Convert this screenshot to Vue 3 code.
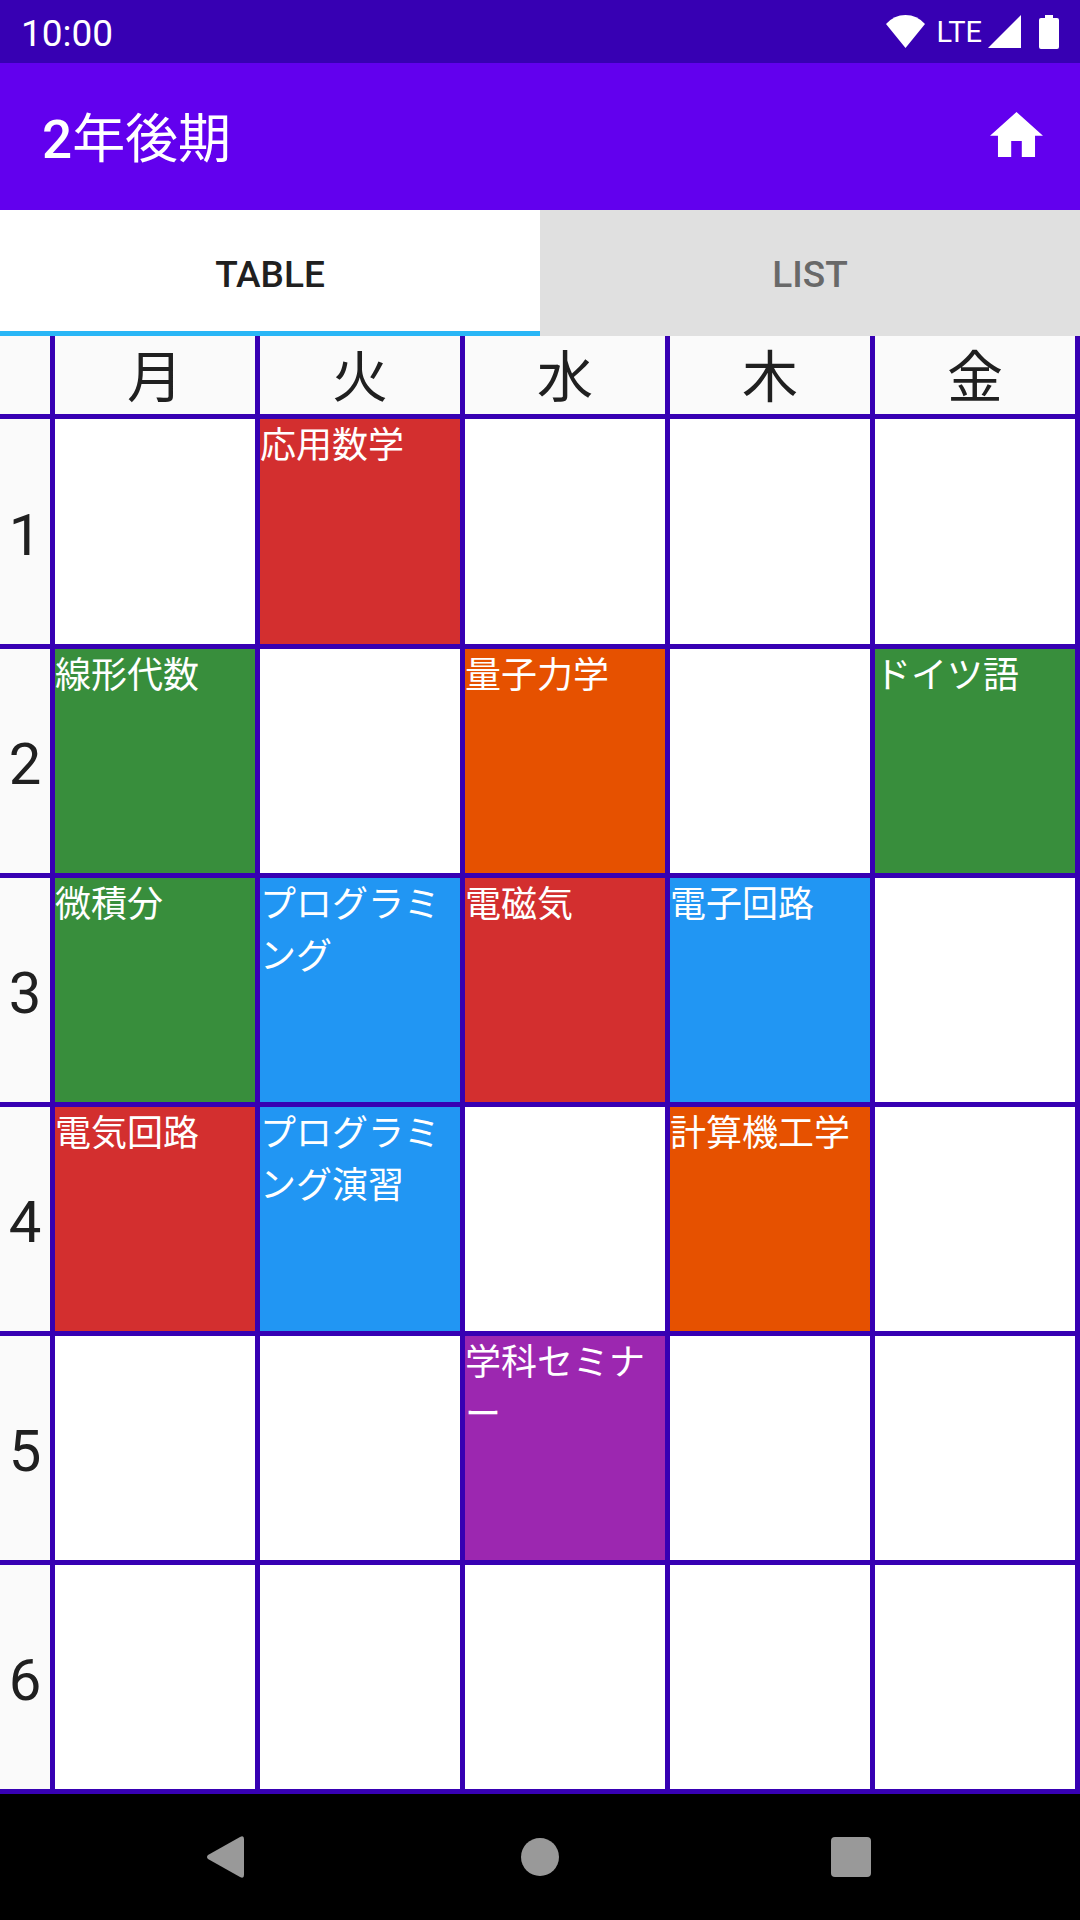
<script setup>
import { ref } from 'vue'

const tabs = ['TABLE', 'LIST']
const activeTab = ref('TABLE')
const days = ['月', '火', '水', '木', '金']

const periods = [
  [null, { name: '応用数学', color: 'red' }, null, null, null],
  [{ name: '線形代数', color: 'green' }, null, { name: '量子力学', color: 'orange' }, null, { name: 'ドイツ語', color: 'green' }],
  [{ name: '微積分', color: 'green' }, { name: 'プログラミング', color: 'blue' }, { name: '電磁気', color: 'red' }, { name: '電子回路', color: 'blue' }, null],
  [{ name: '電気回路', color: 'red' }, { name: 'プログラミング演習', color: 'blue' }, null, { name: '計算機工学', color: 'orange' }, null],
  [null, null, { name: '学科セミナー', color: 'purple' }, null, null],
  [null, null, null, null, null]
]
</script>

<template>
  <div class="screen" lang="ja">
    <div class="status">
      <span class="clock">10:00</span>
      <svg class="wifi" width="39" height="33" viewBox="0 0 39 33" aria-hidden="true">
        <path d="M0 9Q8 0 19.500 0T39 9L19.500 33Z" />
      </svg>
      <span class="network">LTE</span>
      <svg class="signal" width="33" height="33" viewBox="0 0 33 33" aria-hidden="true">
        <path d="M0 33H33V0Z" />
      </svg>
      <svg class="battery" width="20" height="34" viewBox="0 0 20 34" aria-hidden="true">
        <path d="M6 0h8v3h4q2 0 2 2v27q0 2-2 2H2q-2 0-2-2V5q0-2 2-2h4z" />
      </svg>
    </div>

    <header class="appbar">
      <h1>2<span>年後期</span></h1>
      <button class="home" type="button" aria-label="Home">
        <svg width="53" height="45" viewBox="2 3 20 17" aria-hidden="true">
          <path d="M10 20v-6h4v6h5v-8h3L12 3 2 12h3v8z" />
        </svg>
      </button>
    </header>

    <div class="tabs" role="tablist">
      <button
        v-for="tab in tabs"
        :key="tab"
        class="tab"
        :class="{ active: tab === activeTab }"
        type="button"
        role="tab"
        :aria-selected="tab === activeTab"
        @click="activeTab = tab"
      >{{ tab }}</button>
    </div>

    <main class="content">
      <table class="timetable">
        <thead>
          <tr>
            <td class="corner"></td>
            <th v-for="day in days" :key="day" scope="col">{{ day }}</th>
          </tr>
        </thead>
        <tbody>
          <tr v-for="(row, i) in periods" :key="i">
            <th scope="row">{{ i + 1 }}</th>
            <td v-for="(lesson, j) in row" :key="j" :class="lesson?.color">{{ lesson?.name }}</td>
          </tr>
        </tbody>
      </table>
    </main>

    <nav class="navbar">
      <button type="button" aria-label="Back">
        <svg class="back" width="44" height="42" viewBox="0 0 44 42" aria-hidden="true">
          <path d="M1 19 33 1Q37-1 37 3V39Q37 43 33 41L1 23Q-1 21 1 19Z" />
        </svg>
      </button>
      <button type="button" aria-label="Home screen">
        <svg width="38" height="38" viewBox="0 0 38 38" aria-hidden="true">
          <circle cx="19" cy="19" r="19" />
        </svg>
      </button>
      <button type="button" aria-label="Recent apps">
        <svg width="40" height="40" viewBox="0 0 40 40" aria-hidden="true">
          <rect width="40" height="40" rx="4" />
        </svg>
      </button>
    </nav>
  </div>
</template>

<style>
body {
  margin: 0;
}
</style>

<style scoped>
.screen {
  display: flex;
  flex-direction: column;
  min-height: 100vh;
  background: #fafafa;
  color: #202020;
  font-family: Roboto, "Noto Sans CJK JP", sans-serif;
}

button {
  margin: 0;
  padding: 0;
  border: 0;
  background: none;
  font-family: inherit;
  cursor: pointer;
}

svg {
  display: block;
  fill: currentColor;
}

.status {
  display: flex;
  align-items: center;
  height: 63px;
  padding: 0 21px;
  box-sizing: border-box;
  background: #3700b3;
  color: #fff;
}

.clock {
  flex: 1;
  padding-top: 4px;
  font-size: 37px;
}

.network {
  margin: 0 6px 0 11px;
  font-size: 29px;
}

.battery {
  margin-left: 18px;
}

.appbar {
  display: flex;
  align-items: center;
  justify-content: space-between;
  height: 147px;
  padding: 0 37px 4px 42px;
  box-sizing: border-box;
  background: #6200ee;
  color: #fff;
}

h1 {
  margin: 0;
  font-size: 53px;
  font-weight: 500;
}

h1 span {
  font-weight: 400;
}

.home {
  color: #fff;
}

.tabs {
  display: flex;
}

.tab {
  flex: 1;
  height: 126px;
  padding-top: 2px;
  background: #e0e0e0;
  color: #696969;
  font-size: 37px;
  font-weight: 500;
}

.tab.active {
  background: #fff;
  color: #202020;
  box-shadow: inset 0 -5px #29b6f6;
}

.content {
  flex: 1;
  display: grid;
}

.timetable {
  width: 100%;
  height: 100%;
  table-layout: fixed;
  border-spacing: 0;
}

th,
td {
  box-sizing: border-box;
  padding: 0;
  border: solid #3700b3;
  border-width: 0 5px 5px 0;
}

th {
  padding-top: 6px;
  background: #fafafa;
  font-size: 56px;
  font-weight: 400;
}

thead th {
  height: 83px;
  line-height: 72px;
}

tbody th {
  font-size: 58px;
}

.corner {
  width: 55px;
  background: #fafafa;
}

tbody tr {
  height: 229px;
}

tbody tr:first-child {
  height: 230px;
}

tbody td {
  padding-top: 1px;
  background: #fff;
  color: #fff;
  font-size: 36px;
  line-height: 52px;
  vertical-align: top;
  word-break: break-all;
  line-break: loose;
}

tbody td.red {
  background: #d32f2f;
}

tbody td.green {
  background: #388e3c;
}

tbody td.orange {
  background: #e65100;
}

tbody td.blue {
  background: #2196f3;
}

tbody td.purple {
  background: #9c27b0;
}

.navbar {
  display: flex;
  height: 126px;
  padding: 0 73px;
  background: #000;
}

.navbar button {
  flex: 1;
  display: flex;
  align-items: center;
  justify-content: center;
  color: #999;
}
</style>
